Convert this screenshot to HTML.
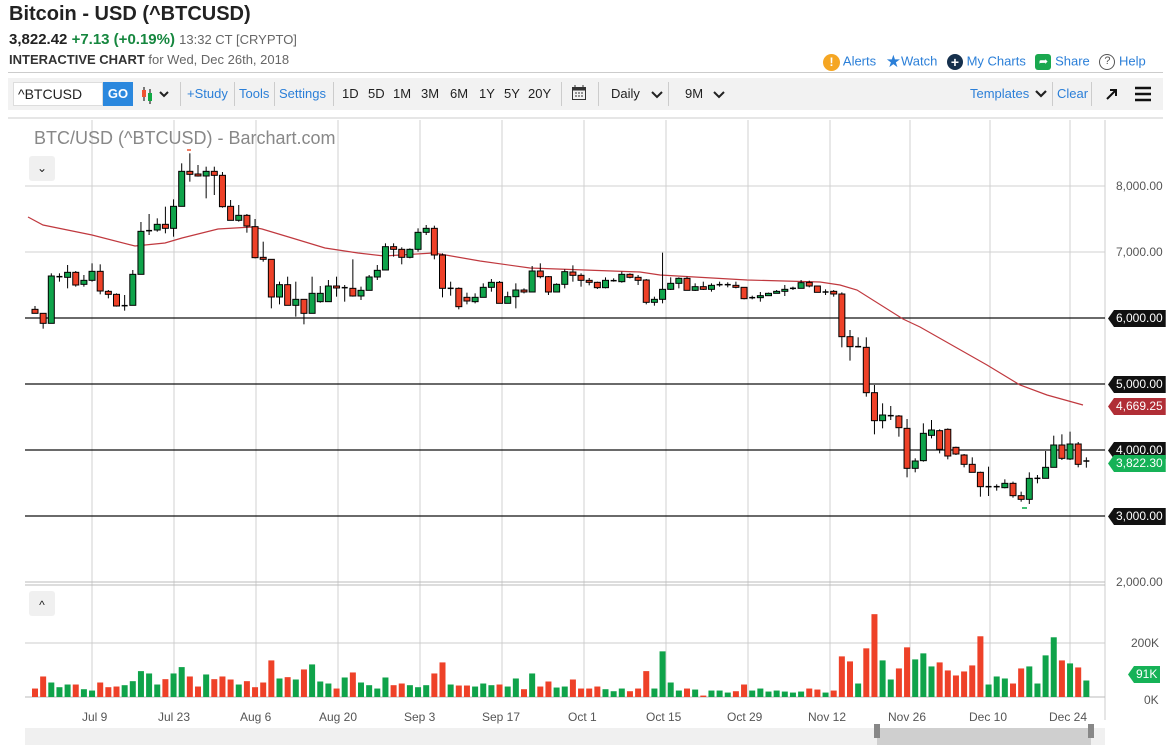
<!DOCTYPE html>
<html><head><meta charset="utf-8"><style>
*{margin:0;padding:0;box-sizing:border-box}
body{width:1171px;height:755px;background:#fff;font-family:"Liberation Sans",sans-serif;position:relative;overflow:hidden;color:#222}
.a{position:absolute;white-space:nowrap}
.blue{color:#2b7fd8}
.tb{font-size:13px;top:86px}
</style></head><body>
<div class="a" style="left:9px;top:3px;font-size:20px;font-weight:bold;">Bitcoin - USD (^BTCUSD)</div>
<div class="a" style="left:9px;top:31px;font-size:15px;"><b>3,822.42</b> <b style="color:#16873f">+7.13 (+0.19%)</b> <span style="color:#666;font-size:13px">13:32 CT [CRYPTO]</span></div>
<div class="a" style="left:9px;top:52px;font-size:13px;color:#666"><b style="color:#333">INTERACTIVE CHART</b> for Wed, Dec 26th, 2018</div>
<div class="a blue" style="left:823px;top:52px;font-size:13px;">
<span style="display:inline-block;width:17px;height:17px;border-radius:50%;background:#f5a623;color:#fff;text-align:center;font-weight:bold;font-size:12px;line-height:17px;vertical-align:middle">!</span> Alerts
<span style="color:#2b7fd8;font-size:17px;vertical-align:middle;margin-left:6px">★</span>Watch
<span style="display:inline-block;width:16px;height:16px;border-radius:50%;background:#16304d;color:#fff;text-align:center;font-weight:bold;font-size:14px;line-height:16px;vertical-align:middle;margin-left:6px">+</span> My Charts
<span style="display:inline-block;width:16px;height:16px;border-radius:3px;background:#1aa84f;color:#fff;text-align:center;font-size:11px;line-height:16px;vertical-align:middle;margin-left:6px">➦</span> Share
<span style="display:inline-block;width:16px;height:16px;border-radius:50%;border:1.5px solid #555;color:#555;text-align:center;font-size:11px;line-height:13px;vertical-align:middle;margin-left:6px">?</span> Help</div>
<div class="a" style="left:8px;top:72px;width:1155px;height:1px;background:#ccc"></div>
<div class="a" style="left:8px;top:78px;width:1155px;height:32px;background:#f2f2f2"></div>
<div class="a" style="left:13px;top:82px;width:90px;height:24px;background:#fff;border:1px solid #ddd;font-size:14px;padding:3px 0 0 4px">^BTCUSD</div>
<div class="a" style="left:103px;top:82px;width:30px;height:24px;background:#2b88de;color:#fff;font-weight:bold;font-size:13px;text-align:center;line-height:24px">GO</div>
<svg class="a" style="left:140px;top:85px" width="32" height="20"><line x1="4" y1="2" x2="4" y2="16" stroke="#000"/><rect x="2" y="5" width="4" height="7" fill="#e53"/><line x1="10" y1="4" x2="10" y2="19" stroke="#000"/><rect x="8" y="8" width="4" height="8" fill="#1a4"/><path d="M20 7l4 4 4-4" stroke="#222" stroke-width="2" fill="none"/></svg>
<div class="a" style="left:180px;top:82px;width:1px;height:24px;background:#ccc"></div>
<div class="a tb blue" style="left:187px">+Study</div>
<div class="a" style="left:234px;top:82px;width:1px;height:24px;background:#ccc"></div>
<div class="a tb blue" style="left:239px">Tools</div>
<div class="a" style="left:274px;top:82px;width:1px;height:24px;background:#ccc"></div>
<div class="a tb blue" style="left:279px">Settings</div>
<div class="a" style="left:333px;top:82px;width:1px;height:24px;background:#ccc"></div>
<div class="a tb" style="left:342px">1D</div><div class="a tb" style="left:368px">5D</div><div class="a tb" style="left:393px">1M</div><div class="a tb" style="left:421px">3M</div><div class="a tb" style="left:450px">6M</div><div class="a tb" style="left:479px">1Y</div><div class="a tb" style="left:504px">5Y</div><div class="a tb" style="left:528px">20Y</div>
<div class="a" style="left:561px;top:82px;width:1px;height:24px;background:#ccc"></div>
<svg class="a" style="left:571px;top:84px" width="16" height="17"><rect x="1.5" y="3.5" width="13" height="12" fill="none" stroke="#333"/><rect x="1.5" y="3.5" width="13" height="3" fill="#333"/><path d="M4 1v4M12 1v4M4 9h2M7 9h2M10 9h2M4 12h2M7 12h2M10 12h2" stroke="#333"/></svg>
<div class="a" style="left:598px;top:82px;width:1px;height:24px;background:#ccc"></div>
<div class="a tb" style="left:611px">Daily</div>
<svg class="a" style="left:651px;top:91px" width="12" height="8"><path d="M1 1l5 5 5-5" stroke="#222" stroke-width="2" fill="none"/></svg>
<div class="a" style="left:668px;top:82px;width:1px;height:24px;background:#ccc"></div>
<div class="a tb" style="left:685px">9M</div>
<svg class="a" style="left:713px;top:91px" width="12" height="8"><path d="M1 1l5 5 5-5" stroke="#222" stroke-width="2" fill="none"/></svg>
<div class="a tb blue" style="left:970px">Templates</div>
<svg class="a" style="left:1035px;top:90px" width="12" height="8"><path d="M1 1l5 5 5-5" stroke="#222" stroke-width="2.2" fill="none"/></svg>
<div class="a" style="left:1052px;top:82px;width:1px;height:24px;background:#ccc"></div>
<div class="a tb blue" style="left:1057px">Clear</div>
<div class="a" style="left:1091px;top:82px;width:1px;height:24px;background:#ccc"></div>
<svg class="a" style="left:1105px;top:87px" width="14" height="14"><path d="M2 12L11 3M5 3h6v6" stroke="#111" stroke-width="2" fill="none"/></svg>
<svg class="a" style="left:1134px;top:86px" width="18" height="16"><path d="M1 2h16M1 8h16M1 14h16" stroke="#111" stroke-width="2.5"/></svg>
<svg id="c" class="a" style="left:0;top:0" width="1171" height="755"></svg>
<div class="a" style="left:34px;top:128px;font-size:18px;color:#888">BTC/USD (^BTCUSD) - Barchart.com</div>
<div class="a" style="left:29px;top:156px;width:26px;height:25px;background:#f0f0f0;border-radius:3px;text-align:center;font-size:12px;line-height:25px">⌄</div>
<div class="a" style="left:29px;top:591px;width:26px;height:25px;background:#f0f0f0;border-radius:3px;text-align:center;font-size:12px;line-height:28px">^</div>
<script>
const s=document.getElementById('c');let h='';
function L(x1,y1,x2,y2,c,w){h+=`<line x1="${x1}" y1="${y1}" x2="${x2}" y2="${y2}" stroke="${c}" stroke-width="${w||1}"/>`}
function R(x,y,w,hh,f,st){h+=`<rect x="${x}" y="${y}" width="${w}" height="${hh}" fill="${f}" ${st?'stroke="'+st+'"':''}/>`}
L(8,118,1163,118,'#ccc');
[92,174,256,338,420,502,584,666,748,830,910,990,1070].forEach(x=>{L(x,120,x,697,'#d0d0d0')});
L(1105,120,1105,720,'#ccc');
[186,252].forEach(y=>L(25,y,1105,y,'#d0d0d0'));
L(25,582,1105,582,'#bbb');L(25,585,1105,585,'#bbb');L(25,643,1105,643,'#ccc');L(25,697,1105,697,'#bbb');
[318,384,450,516].forEach(y=>L(25,y,1105,y,'#111',1.2));
h+='<polyline fill="none" stroke="#c0393f" stroke-width="1.2" points="28,217 43,225 92,235 135,246 165,243 182,238 218,229 252,227 262,229 292,238 325,248 358,253 384,256 433,253 440,254 480,261 530,268 640,272 660,275 747,280 820,282 840,285 857,290 903,319 920,327 987,365 1020,385 1047,395 1083,405"/>';
const A=[['r',508,520,498,520],['r',520,550,520,566],['g',408,550,400,550],['k',410,410,400,425],['g',397,412,375,445],['r',397,435,393,440],['g',421,433,405,440],['g',394,421,370,425],['r',394,453,373,463],['r',454,463,450,475],['r',463,498,460,500],['k',497,497,465,512],['g',403,496,390,496],['g',274,403,246,403],['k',272,272,222,285],['g',253,270,235,275],['r',253,265,200,280],['g',199,265,178,290],['g',94,199,70,199],['r',94,103,40,125],['r',102,108,75,110],['g',94,108,80,175],['r',94,106,80,165],['r',106,200,96,203],['r',199,241,180,241],['g',226,241,195,245],['r',226,258,222,278],['r',260,353,237,355],['r',352,358,305,365],['r',358,471,358,505],['g',434,471,425,493],['r',434,496,410,496],['g',478,496,425,530],['r',478,520,478,553],['g',460,520,410,520],['g',460,485,438,488],['g',438,485,420,485],['r',438,444,410,470],['k',443,443,435,485],['r',445,468,358,470],['g',451,468,440,480],['g',411,451,405,451],['g',391,411,375,420]];
const B=[['g',140,210,130,210],['r',140,148,130,170],['r',148,172,142,193],['g',148,172,145,175],['g',97,148,85,155],['g',85,97,75,105],['r',85,165,77,178],['r',165,265,160,292],['k',265,265,245,287],['r',265,320,262,328],['r',292,303,278,313],['g',292,305,280,310],['g',262,292,250,292],['g',247,262,237,275],['r',247,310,243,310],['g',290,310,275,310],['g',270,290,250,325],['r',270,276,265,280],['g',213,276,198,276],['r',213,230,190,235],['r',230,276,228,285],['g',253,276,250,277],['g',215,253,208,265],['r',216,226,196,245],['r',226,241,220,260],['r',241,247,234,256],['r',247,263,245,267],['g',241,263,232,265],['k',242,242,235,245],['g',223,245,215,248],['r',223,232,220,235],['r',232,241,225,255],['r',240,307,237,313],['g',298,307,290,317],['g',268,298,158,310],['g',250,268,232,270],['g',235,250,232,265],['r',235,271,230,271],['g',260,271,250,273],['r',260,268,245,270],['g',256,268,250,275],['k',254,254,245,260],['k',254,254,247,262],['r',256,262,245,265],['r',262,296,262,298],['k',293,293,287,298],['g',287,292,276,305],['g',280,287,278,288],['g',274,280,270,280],['g',268,274,255,288],['k',265,265,260,270],['g',248,265,240,265],['r',247,258,242,262],['r',258,277,258,277]];
const C=[['k',66,66,58,75],['r',64,72,60,80],['r',72,200,67,232],['r',200,230,180,272],['k',230,230,202,232],['r',232,368,202,380],['r',368,452,345,493],['g',435,452,400,475],['k',437,437,408,450],['r',438,473,435,500],['r',475,595,447,622],['g',573,595,565,607],['g',490,572,460,575],['g',480,496,450,505],['r',482,538,478,550],['r',478,558,475,568],['r',532,552,530,555],['r',555,583,552,592],['r',583,607,562,607],['r',607,650,605,680],['k',650,650,590,678],['k',650,650,643,662],['g',640,653,628,655],['r',640,677,635,683],['r',677,688,665,695],['g',625,688,607,702],['k',625,625,615,640],['g',592,625,543,625],['g',525,592,497,592],['r',525,565,493,570],['g',522,567,485,570],['r',522,583,516,592],['k',573,573,562,593]];
const all=[];A.forEach(d=>all.push([d[0],d[1]/3+140,d[2]/3+140,d[3]/3+140,d[4]/3+140]));
B.forEach(d=>all.push([d[0],d[1]/3+200,d[2]/3+200,d[3]/3+200,d[4]/3+200]));
C.forEach(d=>all.push([d[0],d[1]/3+270,d[2]/3+270,d[3]/3+270,d[4]/3+270]));
const col={g:'#0fa34a',r:'#ee4128',k:'#000'};
all.forEach((d,i)=>{const x=35+i*8.15;L(x,d[3],x,d[4],'#000');
 if(d[0]=='k'){L(x-3,d[1],x+3,d[1],'#000',1.5)}else R(x-3,d[1],6,Math.max(2,d[2]-d[1]),col[d[0]],'#000');});
h+=`<path d="M187 150h4" stroke="#e53" stroke-width="1.5"/><path d="M1022 508h5" stroke="#0a4" stroke-width="1.5"/>`;
const V=[324,288,306,320,312,312,326,330,306,320,318,314,302,272,279,312,296,279,260,288,318,282,296,288,297,312,302,320,306,240,294,290,297,267,252,303,309,324,291,276,306,314,324,291,314,309,314,320,314,279,246,312,315,315,318,309,314,312,318,294,326,279,318,303,321,318,297,324,324,318,326,332,324,332,324,272,324,213,306,330,324,327,345,330,330,336,332,312,330,324,333,330,333,336,333,324,327,336,330,228,243,309,204,102,240,297,264,201,237,219,258,246,270,285,273,255,168,312,288,294,309,264,258,309,225,171,240,249,261,300];
V.forEach((v,i)=>{const x=35+i*8.15;const y=580+v*0.335;const c=all[i]?col[all[i][0]=='k'?'g':all[i][0]]:'#0fa34a';R(x-3,y,6,697-y,c)});
R(25,728,1080,17,'#f0f0f0');R(877,728,214,17,'#cfcfcf');R(874,724,6,14,'#888');R(1088,724,6,14,'#888');
s.innerHTML=h;
</script>
<style>.p{position:absolute;font-size:12px;color:#555}.t{position:absolute;left:1108px;height:17px;padding:1px 3px 0 8px;font-size:12px;color:#fff;clip-path:polygon(6px 0,100% 0,100% 100%,6px 100%,0 50%)}</style>
<div class="p" style="left:1116px;top:179px">8,000.00</div>
<div class="p" style="left:1116px;top:245px">7,000.00</div>
<div class="t" style="top:310px;background:#111">6,000.00</div>
<div class="t" style="top:376px;background:#111">5,000.00</div>
<div class="t" style="top:398px;background:#b02e36">4,669.25</div>
<div class="t" style="top:442px;background:#111">4,000.00</div>
<div class="t" style="top:455px;background:#16b257">3,822.30</div>
<div class="t" style="top:508px;background:#111">3,000.00</div>
<div class="p" style="left:1116px;top:575px">2,000.00</div>
<div class="p" style="left:1131px;top:636px">200K</div>
<div class="t" style="top:666px;left:1128px;background:#16b257">91K</div>
<div class="p" style="left:1144px;top:693px">0K</div>
<div class="p" style="top:710px;left:82px">Jul 9</div><div class="p" style="top:710px;left:158px">Jul 23</div><div class="p" style="top:710px;left:240px">Aug 6</div><div class="p" style="top:710px;left:319px">Aug 20</div><div class="p" style="top:710px;left:404px">Sep 3</div><div class="p" style="top:710px;left:482px">Sep 17</div><div class="p" style="top:710px;left:568px">Oct 1</div><div class="p" style="top:710px;left:646px">Oct 15</div><div class="p" style="top:710px;left:727px">Oct 29</div><div class="p" style="top:710px;left:808px">Nov 12</div><div class="p" style="top:710px;left:888px">Nov 26</div><div class="p" style="top:710px;left:969px">Dec 10</div><div class="p" style="top:710px;left:1049px">Dec 24</div>
</body></html>
